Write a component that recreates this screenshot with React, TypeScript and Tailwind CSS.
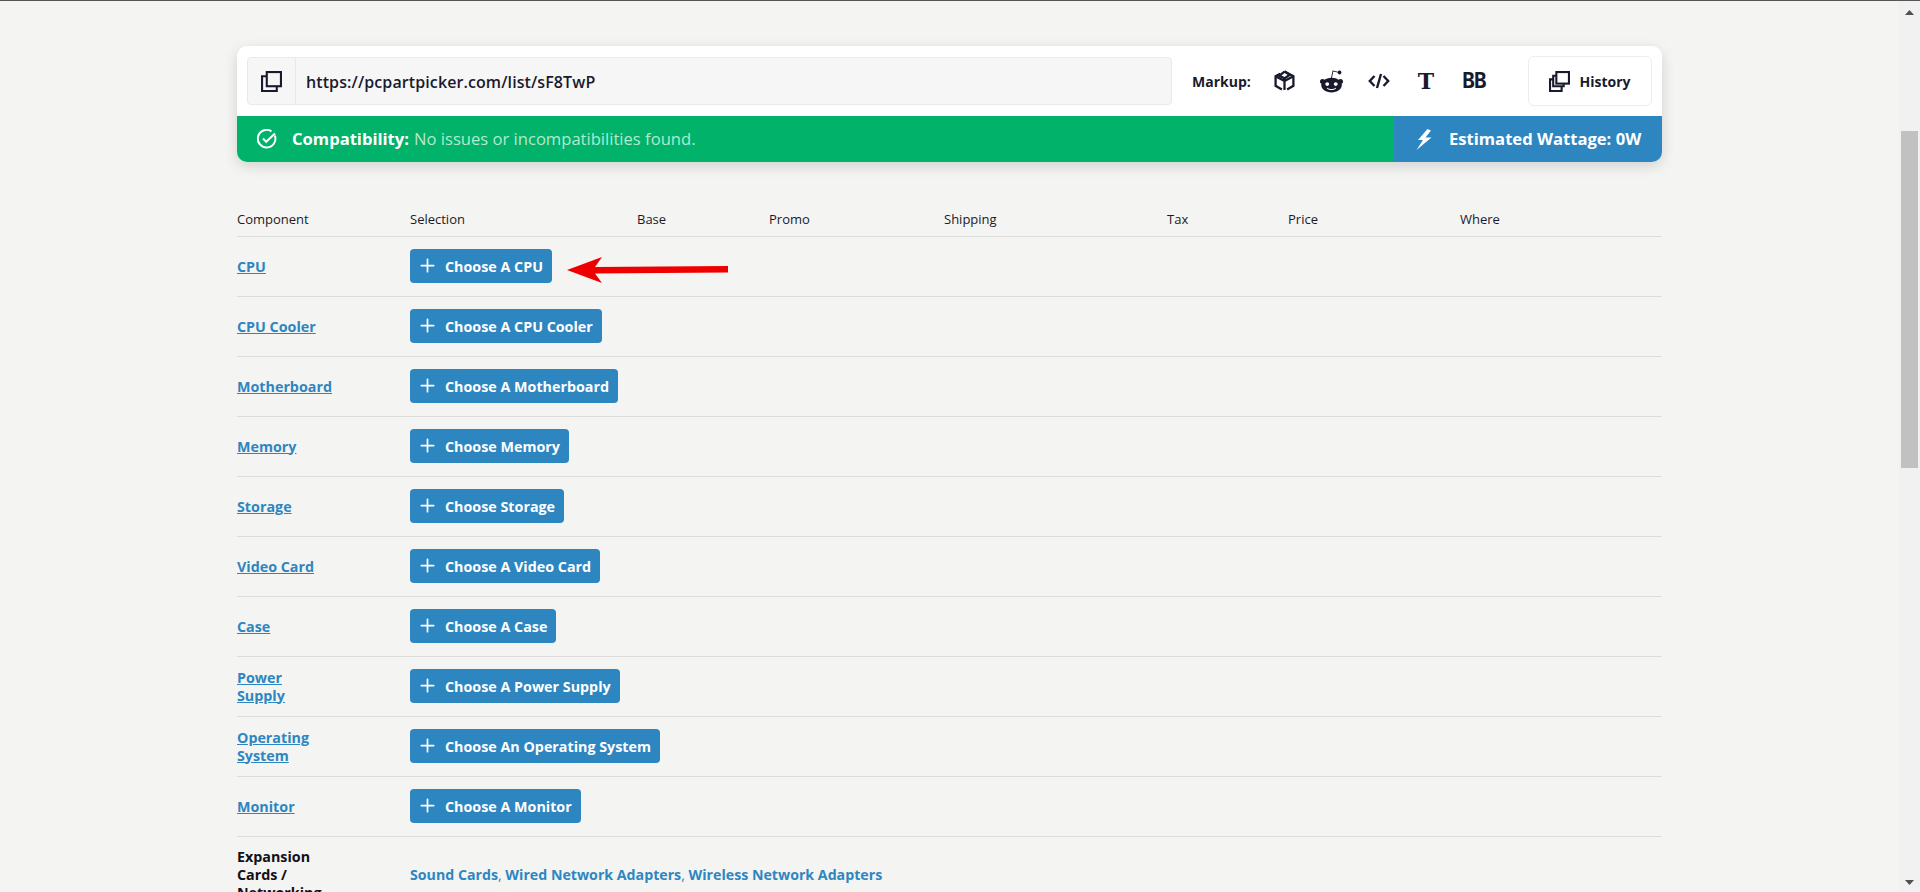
import { Plus } from "lucide-react";
import { FaRedditAlien } from "react-icons/fa";

const parts = [
  { name: "CPU", label: "Choose A CPU" },
  { name: "CPU Cooler", label: "Choose A CPU Cooler" },
  { name: "Motherboard", label: "Choose A Motherboard" },
  { name: "Memory", label: "Choose Memory" },
  { name: "Storage", label: "Choose Storage" },
  { name: "Video Card", label: "Choose A Video Card" },
  { name: "Case", label: "Choose A Case" },
  { name: "Power Supply", label: "Choose A Power Supply" },
  { name: "Operating System", label: "Choose An Operating System" },
  { name: "Monitor", label: "Choose A Monitor" },
];

const headers = ["Component", "Selection", "Base", "Promo", "Shipping", "Tax", "Price", "Where"];

function CopyIcon() {
  return (
    <svg width="21" height="21" viewBox="0 0 20 20" fill="none" stroke="#1a1a2e" strokeWidth="2">
      <rect x="5.500" y="1" width="13.500" height="13.500" />
      <path d="M5.500 5H1v14h14v-4.500" />
    </svg>
  );
}

function HistoryIcon() {
  return (
    <svg width="21" height="21" viewBox="0 0 20 20" fill="none" stroke="#1a1a2e" strokeWidth="2">
      <rect x="7" y="1" width="12" height="11" />
      <path d="M7 4.500H4v10h10V12" />
      <path d="M4 8H1v11h11v-4.500" />
    </svg>
  );
}

function BoxIcon() {
  return (
    <svg width="21" height="22" viewBox="0 0 20 21" fill="none" stroke="#1a1a2e" strokeWidth="2.200" strokeLinejoin="miter">
      <path d="M10 1.500 18.500 6v9l-6 3.500M7.500 18.500 1.500 15V6L6 3.500" />
      <path d="M10 1.500 15 4.500 10 8 5 5.500 10 1.500" />
      <path d="M10 8v11M1.500 6 10 10.500M18.500 6 10 10.500" />
    </svg>
  );
}

function CodeIcon() {
  return (
    <svg width="22" height="16" viewBox="0 0 22 16" fill="none" stroke="#1a1a2e" strokeWidth="2.400">
      <path d="M6.500 3 1.800 8l4.700 5M15.500 3l4.700 5-4.700 5M13 1 9 15" />
    </svg>
  );
}

function BoltIcon() {
  return (
    <svg width="16" height="21" viewBox="0 0 16 21" fill="#ffffff">
      <path d="M11.500 0 2 11h5L0.500 21 15.500 8.500H9.500L15 1.500 Z" />
    </svg>
  );
}

function CheckIcon() {
  return (
    <svg width="20" height="20" viewBox="0 0 20 20" fill="none" stroke="#ffffff" strokeWidth="2">
      <path d="M17.800 6.500A8.800 8.800 0 1 1 14.500 2.400" />
      <path d="M6 9.500l3.200 3.300L18 4.500" />
    </svg>
  );
}

function Arrow() {
  return (
    <svg className="absolute left-[157px] top-[8px]" width="162" height="26" viewBox="0 0 162 26">
      <path d="M0 13 35 0 28 10 161 9V15.500L28 16.500 35 26Z" fill="#ee0000" />
    </svg>
  );
}

export default function App() {
  return (
    <div className="h-[892px] overflow-hidden flex bg-[#f4f4f2] border-t border-[#555555] font-['Open_Sans','Noto_Sans',sans-serif] text-[#1a1a2e]">
      <main className="flex-1">
        <div className="w-[1425px] mx-auto mt-[45px]">
          <div className="rounded-[10px] shadow-[0_4px_14px_rgba(0,0,0,0.14)] overflow-hidden">
            <div className="bg-white h-[70px] flex items-center pl-[10px] pr-[10px]">
              <div className="w-[925px] h-[48px] flex border border-[#e9e9e9] rounded-[4px] bg-[#f6f6f7]">
                <div className="w-[48px] flex items-center justify-center border-r border-[#e9e9e9]">
                  <CopyIcon />
                </div>
                <div className="flex items-center pl-[10px] pt-[1px] text-[16px] font-semibold tracking-[0.1px]">https://pcpartpicker.com/list/sF8TwP</div>
              </div>
              <span className="ml-[20px] text-[14px] font-bold w-[65px]">Markup:</span>
              <div className="ml-[3px] w-[48px] flex justify-center"><BoxIcon /></div>
              <div className="w-[47px] flex justify-center"><FaRedditAlien size={25} color="#1a1a2e" /></div>
              <div className="w-[47px] flex justify-center"><CodeIcon /></div>
              <div className="w-[48px] flex justify-center font-['DejaVu_Serif',serif] font-bold text-[22px] leading-none">T</div>
              <div className="w-[48px] flex justify-center font-['DejaVu_Sans_Mono',monospace] font-bold text-[21px] leading-none tracking-[-1px]">BB</div>
              <button className="ml-auto w-[124px] h-[50px] flex items-center justify-center gap-[9px] bg-white border border-[#ececec] rounded-[6px] text-[14px] font-bold">
                <HistoryIcon />
                History
              </button>
            </div>
            <div className="h-[46px] flex text-white">
              <div className="flex-1 bg-[#00b26a] flex items-center pl-[20px] text-[16.6px]">
                <CheckIcon />
                <span className="ml-[15px] pt-[1px] font-bold">Compatibility:</span>
                <span className="ml-[5px] pt-[1px] text-[#b5e8d0]">No issues or incompatibilities found.</span>
              </div>
              <div className="w-[268px] bg-[#2e86c1] flex items-center pl-[22px] text-[16.6px] font-bold">
                <BoltIcon />
                <span className="ml-[17px] pt-[1px]">Estimated Wattage: 0W</span>
              </div>
            </div>
          </div>

          <div className="mt-[46px] pt-[2px] grid grid-cols-[173px_227px_132px_175px_223px_121px_172px_1fr] h-[29px] border-b border-[#dcdcda] text-[13px] leading-[18px]">
            {headers.map((h) => (
              <span key={h}>{h}</span>
            ))}
          </div>

          {parts.map((p, i) => (
            <div key={p.name} className="relative h-[60px] flex items-center border-b border-[#dcdcda]">
              <a className="w-[173px] pr-[78px] text-[14.3px] leading-[18px] font-bold text-[#2e86c1] underline">{p.name}</a>
              <div className="relative mb-[2px]">
                <button className="h-[34px] flex items-center pl-[7px] pr-[9px] pt-[2px] gap-[7px] bg-[#2e86c1] text-white rounded-[4px] text-[14.3px] font-bold">
                  <Plus size={21} strokeWidth={2} className="-mt-[2px]" />
                  {p.label}
                </button>
                {i === 0 && <Arrow />}
              </div>
            </div>
          ))}

          <div className="flex items-center pt-[11px]">
            <div className="w-[173px] pr-[78px] text-[14.3px] leading-[18px] font-bold text-[#111118]">Expansion Cards / Networking</div>
            <div className="text-[14.2px] font-bold text-[#2e86c1]">
              Sound Cards<span className="font-normal">, </span>Wired Network Adapters<span className="font-normal">, </span>Wireless Network Adapters
            </div>
          </div>
        </div>
      </main>

      <aside className="w-[21px] bg-[#f1f1f1] flex flex-col items-center">
        <svg className="mt-[9px]" width="9" height="5" viewBox="0 0 9 5"><path d="M4.500 0 9 5H0Z" fill="#505050" /></svg>
        <div className="mt-[116px] w-[17px] h-[337px] bg-[#c1c1c1]" />
        <svg className="mt-auto mb-[7px]" width="9" height="5" viewBox="0 0 9 5"><path d="M0 0H9L4.500 5Z" fill="#505050" /></svg>
      </aside>
    </div>
  );
}
